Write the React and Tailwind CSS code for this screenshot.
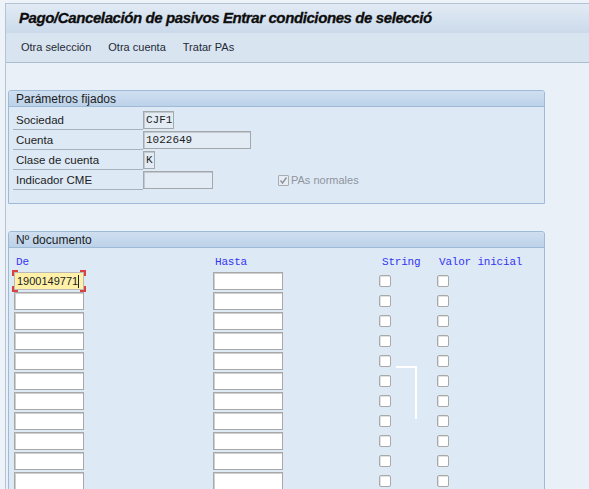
import React from 'react';

const sans = "font-['Liberation_Sans',Arial,sans-serif]";
const mono = "font-['Liberation_Mono','Courier_New',monospace]";

const params = [
  { label: 'Sociedad', value: 'CJF1', w: 'w-[31px]' },
  { label: 'Cuenta', value: '1022649', w: 'w-[108px]' },
  { label: 'Clase de cuenta', value: 'K', w: 'w-[12px]' },
  { label: 'Indicador CME', value: '', w: 'w-[70px]' },
];

const rows = Array.from({ length: 12 }, (_, i) => i);

const GroupHeader = ({ children }) => (
  <div className="h-[16px] bg-gradient-to-b from-[#cfdff0] to-[#bcd2e9] border-b border-[#9fbad7] rounded-t-[3px] pl-[7px] text-[12px] leading-[16px] text-[#1c1c1c]">
    {children}
  </div>
);

const Checkbox = () => (
  <div className="w-[12px] h-[12px] bg-white border border-[#a9a9a9] rounded-[2px] shadow-[inset_1px_1px_0_#e2e2e2]" />
);

export default function App() {
  return (
    <div className={`w-[589px] h-[489px] overflow-hidden bg-[#eef3f9] pt-[3px] pl-[5px] ${sans}`}>
      <div className="h-full border-l border-t border-[#b4c3d3] bg-[#e9f0f8]">
        {/* title */}
        <div className="h-[29px] bg-gradient-to-b from-[#e2ebf5] to-[#cbdaeb] pl-[13px] flex items-center">
          <span className="text-[15px] font-bold italic text-[#0d0d0d] tracking-[-0.4px] [-webkit-text-stroke:0.3px_#0d0d0d]">
            Pago/Cancelación de pasivos Entrar condiciones de selecció
          </span>
        </div>
        {/* toolbar */}
        <div className="h-[30px] bg-[#d8e4f0] border-b border-[#a9bdd3] flex items-center pl-[15px] gap-[17px] text-[11px] text-[#1f2a36]">
          <span>Otra selección</span>
          <span>Otra cuenta</span>
          <span>Tratar PAs</span>
        </div>

        {/* Parámetros fijados */}
        <div className="mt-[27px] ml-[2px] w-[537px] border border-[#9fbad7] rounded-t-[3px] bg-[#dde9f5]">
          <GroupHeader>Parámetros fijados</GroupHeader>
          <div className="pt-[3px] pb-[13px]">
            {params.map((p, i) => (
              <div key={p.label} className="h-[20px] flex items-center">
                <div className="ml-[4px] w-[130px] h-[19px] border-b border-[#a6b2bf] pl-[3px] text-[11.5px] leading-[19px] text-[#1c1c1c]">
                  {p.label}
                </div>
                <div
                  className={`${p.w} h-[18px] border border-[#a3a8ad] shadow-[inset_1px_1px_0_#c4c9ce] bg-[#e3ecf5] pl-[2px] text-[11px] leading-[16px] text-[#222] ${mono}`}
                >
                  {p.value}
                </div>
                {i === 3 && (
                  <div className="ml-[65px] flex items-center gap-[2px] text-[11px] text-[#8f959c]">
                    <div className="w-[11px] h-[11px] border border-[#a9adb2] rounded-[1px] flex items-center justify-center bg-[#e6edf4]">
                      <svg width="9" height="9" viewBox="0 0 9 9">
                        <path d="M1.5 4.5 L3.5 7 L7.5 1.5" fill="none" stroke="#8d939a" strokeWidth="1.4" />
                      </svg>
                    </div>
                    <span>PAs normales</span>
                  </div>
                )}
              </div>
            ))}
          </div>
        </div>

        {/* Nº documento */}
        <div className="relative mt-[27px] ml-[2px] w-[537px] h-[300px] border border-[#9fbad7] rounded-t-[3px] bg-[#dde9f5]">
          <GroupHeader>Nº documento</GroupHeader>
          <div className={`flex h-[23px] items-end pb-[3px] text-[11px] leading-[12px] text-[#3434f4] tracking-[-0.2px] ${mono}`}>
            <span className="ml-[7px] w-[199px]">De</span>
            <span className="w-[167px]">Hasta</span>
            <span className="w-[57px]">String</span>
            <span>Valor inicial</span>
          </div>
          <div className="flex flex-col">
            {rows.map((i) => (
              <div key={i} className="h-[20px] flex items-center">
                <div className="ml-[5px] w-[199px]">
                  {i === 0 ? (
                    <div className="relative w-[70px] h-[18px]">
                      <div className="absolute -left-[2px] -top-[2px] w-[6px] h-[6px] border-l-2 border-t-2 border-[#d8413f]" />
                      <div className="absolute -right-[2px] -top-[2px] w-[6px] h-[6px] border-r-2 border-t-2 border-[#d8413f]" />
                      <div className="absolute -left-[2px] -bottom-[2px] w-[6px] h-[6px] border-l-2 border-b-2 border-[#d8413f]" />
                      <div className="absolute -right-[2px] -bottom-[2px] w-[6px] h-[6px] border-r-2 border-b-2 border-[#d8413f]" />
                      <div className="w-full h-full bg-[#fff2a8] border border-[#b9b9b9] pl-[2px] text-[11px] leading-[16px] text-[#222] flex items-center">
                        1900149771<span className="w-px h-[13px] bg-[#222]" />
                      </div>
                    </div>
                  ) : (
                    <div className="w-[70px] h-[18px] bg-white border border-[#a8a8a8] shadow-[inset_1px_1px_0_#cfcfcf]" />
                  )}
                </div>
                <div className="w-[166px]">
                  <div className="w-[70px] h-[18px] bg-white border border-[#a8a8a8] shadow-[inset_1px_1px_0_#cfcfcf]" />
                </div>
                <div className="w-[58px]">
                  <Checkbox />
                </div>
                <Checkbox />
              </div>
            ))}
          </div>
          {/* white connector line */}
          <div className="absolute left-[387px] top-[134px] w-[21px] h-[2px] bg-white" />
          <div className="absolute left-[406px] top-[134px] w-[2px] h-[53px] bg-white" />
        </div>
      </div>
    </div>
  );
}
